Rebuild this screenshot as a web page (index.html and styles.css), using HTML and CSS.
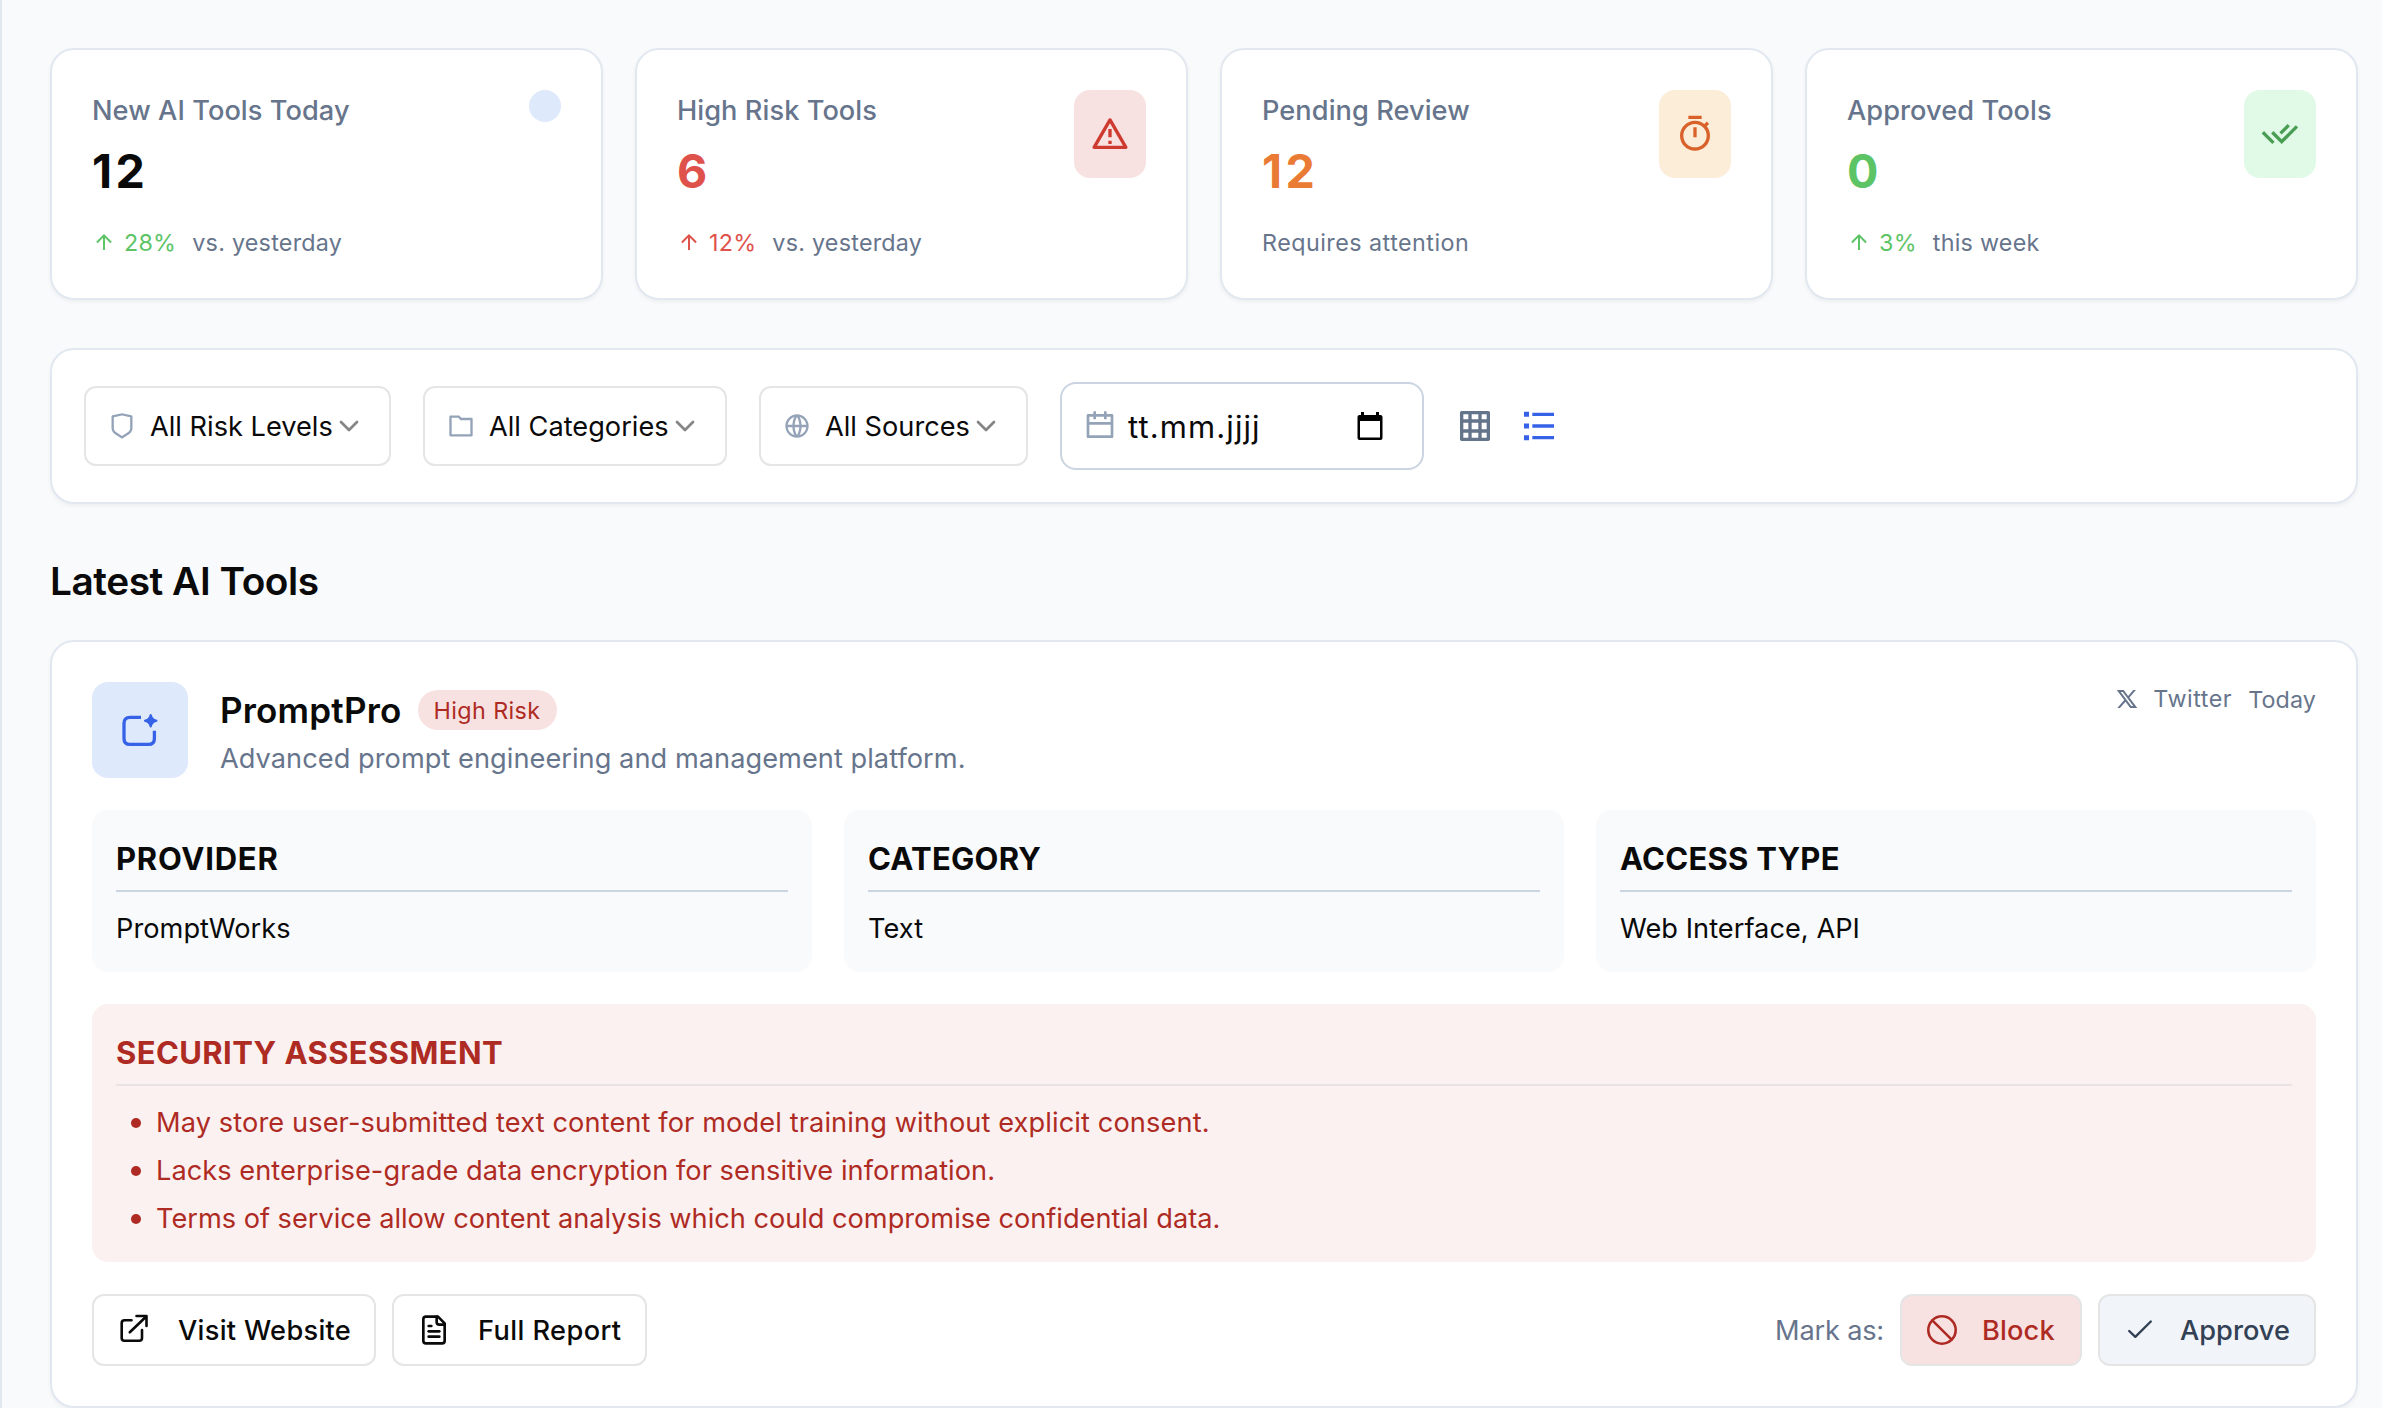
FILE: index.html
```html
<!DOCTYPE html>
<html lang="en">
<head>
<meta charset="utf-8">
<title>AI Tools Dashboard</title>
<link rel="stylesheet" href="styles.css">
</head>
<body>
<main class="page">
  <section class="stats">
    <article class="card stat">
      <div class="stat-body">
        <p class="stat-label">New AI Tools Today</p>
        <p class="stat-value">12</p>
        <p class="stat-note"><svg class="i24 green" viewBox="0 0 24 24"><path d="M13.0001 7.82843V20H11.0001V7.82843L5.63614 13.1924L4.22192 11.7782L12.0001 4L19.7783 11.7782L18.3641 13.1924L13.0001 7.82843Z"/></svg><span class="pct green">28%</span><span>vs. yesterday</span></p>
      </div>
      <span class="stat-dot"></span>
    </article>
    <article class="card stat">
      <div class="stat-body">
        <p class="stat-label">High Risk Tools</p>
        <p class="stat-value red">6</p>
        <p class="stat-note"><svg class="i24 red" viewBox="0 0 24 24"><path d="M13.0001 7.82843V20H11.0001V7.82843L5.63614 13.1924L4.22192 11.7782L12.0001 4L19.7783 11.7782L18.3641 13.1924L13.0001 7.82843Z"/></svg><span class="pct red">12%</span><span>vs. yesterday</span></p>
      </div>
      <span class="stat-icon tile-red"><svg class="i40" viewBox="0 0 24 24"><path d="M12.866 3L22.3923 19.5C22.6684 19.9783 22.5045 20.5899 22.0262 20.866C21.8742 20.9538 21.7017 21 21.5262 21H2.47372C1.92144 21 1.47372 20.5523 1.47372 20C1.47372 19.8245 1.51993 19.652 1.60769 19.5L11.134 3C11.4101 2.52171 12.0217 2.35783 12.5 2.63398C12.652 2.72174 12.7783 2.848 12.866 3ZM4.20577 19H19.7942L12 5.5L4.20577 19ZM11 16H13V18H11V16ZM11 9H13V14H11V9Z"/></svg></span>
    </article>
    <article class="card stat">
      <div class="stat-body">
        <p class="stat-label">Pending Review</p>
        <p class="stat-value orange">12</p>
        <p class="stat-note stat-note-plain"><span>Requires attention</span></p>
      </div>
      <span class="stat-icon tile-orange"><svg class="i40" viewBox="0 0 24 24"><path d="M17.6177 5.9681L19.0711 4.51472L20.4853 5.92893L19.0319 7.38231C20.2635 8.92199 21 10.875 21 13C21 17.9706 16.9706 22 12 22C7.02944 22 3 17.9706 3 13C3 8.02944 7.02944 4 12 4C14.125 4 16.078 4.73647 17.6177 5.9681ZM12 20C15.866 20 19 16.866 19 13C19 9.13401 15.866 6 12 6C8.13401 6 5 9.13401 5 13C5 16.866 8.13401 20 12 20ZM11 8H13V14H11V8ZM8 1H16V3H8V1Z"/></svg></span>
    </article>
    <article class="card stat">
      <div class="stat-body">
        <p class="stat-label">Approved Tools</p>
        <p class="stat-value green">0</p>
        <p class="stat-note"><svg class="i24 green" viewBox="0 0 24 24"><path d="M13.0001 7.82843V20H11.0001V7.82843L5.63614 13.1924L4.22192 11.7782L12.0001 4L19.7783 11.7782L18.3641 13.1924L13.0001 7.82843Z"/></svg><span class="pct green">3%</span><span>this week</span></p>
      </div>
      <span class="stat-icon tile-green"><svg class="i40" viewBox="0 0 24 24"><path d="M11.602 13.7599L13.014 15.1719L21.4795 6.7063L22.8938 8.12051L13.014 18.0003L6.65 11.6363L8.06421 10.2221L10.189 12.3469L11.6025 13.7594L11.602 13.7599ZM11.6037 10.9322L16.5563 5.97949L17.9666 7.38977L13.014 12.3424L11.6037 10.9322ZM8.77698 16.5873L7.36396 18.0003L1 11.6363L2.41421 10.2221L3.82723 11.6352L3.82604 11.6363L8.77698 16.5873Z"/></svg></span>
    </article>
  </section>

  <section class="card filters">
    <div class="select select-risk">
      <svg class="i28" viewBox="0 0 24 24"><path d="M3.78307 2.82598L12 1L20.2169 2.82598C20.6745 2.92766 21 3.33347 21 3.80217V13.7889C21 15.795 19.9974 17.6684 18.3282 18.7812L12 23L5.6718 18.7812C4.00261 17.6684 3 15.795 3 13.7889V3.80217C3 3.33347 3.32553 2.92766 3.78307 2.82598ZM5 4.60434V13.7889C5 15.1263 5.6684 16.3752 6.7812 17.1171L12 20.5963L17.2188 17.1171C18.3316 16.3752 19 15.1263 19 13.7889V4.60434L12 3.04879L5 4.60434Z"/></svg>
      <span class="select-text">All Risk Levels</span>
      <svg class="chevron" viewBox="0 0 20 12"><path d="M2 2L10 10L18 2"/></svg>
    </div>
    <div class="select select-category">
      <svg class="i28" viewBox="0 0 24 24"><path d="M4 5V19H20V7H11.5858L9.58579 5H4ZM12.4142 5H21C21.5523 5 22 5.44772 22 6V20C22 20.5523 21.5523 21 21 21H3C2.44772 21 2 20.5523 2 20V4C2 3.44772 2.44772 3 3 3H10.4142L12.4142 5Z"/></svg>
      <span class="select-text">All Categories</span>
      <svg class="chevron" viewBox="0 0 20 12"><path d="M2 2L10 10L18 2"/></svg>
    </div>
    <div class="select select-source">
      <svg class="i28" viewBox="0 0 24 24"><path d="M12 22C6.47715 22 2 17.5228 2 12C2 6.47715 6.47715 2 12 2C17.5228 2 22 6.47715 22 12C22 17.5228 17.5228 22 12 22ZM9.71002 19.6674C8.74743 17.6259 8.15732 15.3742 8.02731 13H4.06189C4.458 16.1765 6.71639 18.7747 9.71002 19.6674ZM10.0307 13C10.1811 15.4388 10.8778 17.7297 12 19.752C13.1222 17.7297 13.8189 15.4388 13.9693 13H10.0307ZM19.9381 13H15.9727C15.8427 15.3742 15.2526 17.6259 14.29 19.6674C17.2836 18.7747 19.542 16.1765 19.9381 13ZM4.06189 11H8.02731C8.15732 8.62577 8.74743 6.37407 9.71002 4.33256C6.71639 5.22533 4.458 7.8235 4.06189 11ZM10.0307 11H13.9693C13.8189 8.56122 13.1222 6.27025 12 4.24799C10.8778 6.27025 10.1811 8.56122 10.0307 11ZM14.29 4.33256C15.2526 6.37407 15.8427 8.62577 15.9727 11H19.9381C19.542 7.8235 17.2836 5.22533 14.29 4.33256Z"/></svg>
      <span class="select-text">All Sources</span>
      <svg class="chevron" viewBox="0 0 20 12"><path d="M2 2L10 10L18 2"/></svg>
    </div>
    <div class="date">
      <svg class="i32" viewBox="0 0 24 24"><path d="M9 1V3H15V1H17V3H21C21.5523 3 22 3.44772 22 4V20C22 20.5523 21.5523 21 21 21H3C2.44772 21 2 20.5523 2 20V4C2 3.44772 2.44772 3 3 3H7V1H9ZM20 11H4V19H20V11ZM7 5H4V9H20V5H17V7H15V5H9V7H7V5Z"/></svg>
      <span class="date-text">tt.mm.jjjj</span>
      <svg class="date-picker" viewBox="0 0 26 28"><path fill-rule="evenodd" d="M4 0H7V3H19V0H22V3H23.5Q25.5 3 25.5 5V26Q25.5 28 23.5 28H2.500Q.5 28 .5 26V5Q.5 3 2.500 3H4ZM3 9V25.500H23V9Z"/></svg>
    </div>
    <div class="views">
      <svg class="i40 view-grid" viewBox="0 0 24 24"><path d="M14 10H10V14H14V10ZM16 10V14H19V10H16ZM14 19V16H10V19H14ZM16 19H19V16H16V19ZM14 5H10V8H14V5ZM16 5V8H19V5H16ZM8 10H5V14H8V10ZM8 19V16H5V19H8ZM8 5H5V8H8V5ZM4 3H20C20.5523 3 21 3.44772 21 4V20C21 20.5523 20.5523 21 20 21H4C3.44772 21 3 20.5523 3 20V4C3 3.44772 3.44772 3 4 3Z"/></svg>
      <svg class="i40 view-list" viewBox="0 0 24 24"><path d="M8 4H21V6H8V4ZM3 3.5H6V6.5H3V3.5ZM3 10.5H6V13.5H3V10.5ZM3 17.5H6V20.5H3V17.5ZM8 11H21V13H8V11ZM8 18H21V20H8V18Z"/></svg>
    </div>
  </section>

  <h2 class="section-title">Latest AI Tools</h2>

  <article class="card tool">
    <header class="tool-head">
      <span class="tool-logo"><svg viewBox="0 0 40 40"><path class="frame" d="M21 7.400H10Q4 7.400 4 13.400V28.400Q4 34.400 10 34.400H28.400Q34.400 34.400 34.400 28.400V20.700"/><path class="spark" d="M30.700 3.900Q31.600 3.900 31.900 5.200Q32.700 8.700 36.200 9.500Q37.500 9.800 37.500 10.700Q37.500 11.600 36.200 11.900Q32.700 12.700 31.900 16.200Q31.600 17.500 30.700 17.500Q29.800 17.500 29.500 16.200Q28.700 12.700 25.200 11.900Q23.900 11.600 23.900 10.700Q23.900 9.800 25.200 9.500Q28.700 8.700 29.500 5.200Q29.800 3.900 30.700 3.900Z"/></svg></span>
      <div class="tool-title">
        <div class="tool-name-row"><h3 class="tool-name">PromptPro</h3><span class="badge">High Risk</span></div>
        <p class="tool-desc">Advanced prompt engineering and management platform.</p>
      </div>
      <div class="tool-meta">
        <svg class="i24" viewBox="0 0 24 24"><path d="M10.4883 14.651L15.25 21H22.25L14.3917 10.5223L20.9308 3H18.2808L13.1643 8.88578L8.75 3H1.75L9.26086 13.0145L2.31915 21H4.96917L10.4883 14.651ZM16.25 19L5.75 5H7.75L18.25 19H16.25Z"/></svg>
        <span class="meta-source">Twitter</span>
        <span class="meta-date">Today</span>
      </div>
    </header>

    <div class="facts">
      <section class="fact"><h4 class="block-title title-wide">PROVIDER</h4><p>PromptWorks</p></section>
      <section class="fact"><h4 class="block-title">CATEGORY</h4><p>Text</p></section>
      <section class="fact"><h4 class="block-title">ACCESS TYPE</h4><p>Web Interface, API</p></section>
    </div>

    <section class="security">
      <h4 class="block-title">SECURITY ASSESSMENT</h4>
      <ul class="risks">
        <li>May store user-submitted text content for model training without explicit consent.</li>
        <li>Lacks enterprise-grade data encryption for sensitive information.</li>
        <li>Terms of service allow content analysis which could compromise confidential data.</li>
      </ul>
    </section>

    <footer class="actions">
      <button class="btn btn-visit"><svg class="i32" viewBox="0 0 32 32"><path d="M13.500 6.300H6.500Q3.700 6.300 3.700 9.100V23.900Q3.700 26.700 6.500 26.700H21.200Q24 26.700 24 23.900V16M11.800 18.300L28 2.700M18.500 2H28.500V12"/></svg>Visit Website</button>
      <button class="btn btn-report"><svg class="i32" viewBox="0 0 24 24"><path d="M15 2H6a2 2 0 0 0-2 2v16a2 2 0 0 0 2 2h12a2 2 0 0 0 2-2V7Z"/><path d="M14 2v4a2 2 0 0 0 2 2h4"/><path d="M10 9H8"/><path d="M16 13H8"/><path d="M16 17H8"/></svg>Full Report</button>
      <span class="mark-label">Mark as:</span>
      <button class="btn btn-block"><svg class="i32" viewBox="0 0 32 32"><circle cx="16" cy="16" r="13.700"/><path d="M6.300 6.300L25.700 25.700"/></svg>Block</button>
      <button class="btn btn-approve"><svg class="i32" viewBox="0 0 32 32"><path d="M5.200 17L11.300 22.800L26.800 7.500"/></svg>Approve</button>
    </footer>
  </article>
</main>
</body>
</html>
```
FILE: styles.css
```css
* { box-sizing: border-box; margin: 0; padding: 0; }

body {
  height: 1408px;
  overflow: hidden;
  background: #f9fafc;
  color: #0a0a0a;
  font: 400 27.2px/40px Inter, sans-serif;
  font-optical-sizing: none;
  letter-spacing: .04px;
}

svg { display: block; flex: none; fill: currentColor; }
.i24 { width: 24px; height: 24px; }
.i28 { width: 28px; height: 28px; }
.i32 { width: 32px; height: 32px; }
.i40 { width: 40px; height: 40px; }

.page {
  height: 1408px;
  padding: 48px 24px 0 48px;
  border-left: 2px solid #e2e8f0;
}

.card {
  background: #fff;
  border: 2px solid #e2e8f0;
  border-radius: 24px;
  box-shadow: 0 2px 4px rgba(0, 0, 0, .05);
}

.red { color: #df524c; }
.orange { color: #e97b35; }
.green { color: #5dc466; }

/* Optical alignment: text sits one pixel lower in its line */
.stat-label, .tool-desc, .fact p, .risks li { padding-top: 1px; margin-bottom: -1px; }

/* Stat cards */
.stats { display: grid; grid-template-columns: repeat(4, 1fr); gap: 32px; }
.stat { display: flex; justify-content: space-between; align-items: flex-start; padding: 40px; height: 252px; }
.stat-label { color: #67758c; font-weight: 500; letter-spacing: .06px; }
.stat-value { margin-top: 8px; font-size: 46.600px; line-height: 66px; font-weight: 700; letter-spacing: 3.500px; }
.stat-note { display: flex; align-items: center; margin-top: 22px; font-size: 23.300px; line-height: 32px; letter-spacing: .25px; color: #67758c; }
.stat-note span { padding-top: 1px; margin-bottom: -1px; }
.stat-note-plain { letter-spacing: .48px; }
.stat-note .pct { margin: 0 16px -1px 8px; }
.stat-icon { display: flex; align-items: center; justify-content: center; width: 72px; height: 88px; border-radius: 16px; }
.stat-dot { width: 32px; height: 32px; border-radius: 50%; background: #dee9fb; }
.tile-red { background: #f8e2e1; color: #ce3a2f; }
.tile-orange { background: #fcedd9; color: #d9622b; }
.tile-green { background: #e1f9e7; color: #4a9e54; }

/* Filter bar */
.filters { display: flex; align-items: center; gap: 32px; height: 156px; margin-top: 48px; padding: 32px; }
.select { display: flex; align-items: center; height: 80px; padding-left: 22px; border: 2px solid #e5e5e5; border-radius: 12px; color: #94a3b8; }
.select-risk { width: 307px; }
.select-category { width: 304px; }
.select-source { width: 269px; }
.select-text { margin-left: 14px; padding-top: 2px; color: #0a0a0a; letter-spacing: 0; white-space: nowrap; }
.chevron { width: 20px; height: 12px; margin-left: 6px; fill: none; stroke: #858585; stroke-width: 2.700; stroke-linecap: round; stroke-linejoin: round; }
.date { display: flex; align-items: center; width: 364px; height: 88px; padding: 0 39px 0 22px; border: 2px solid #cbd5e1; border-radius: 16px; color: #94a3b8; }
.date-text { margin-left: 12px; padding-top: 2px; color: #0a0a0a; font-size: 31px; letter-spacing: 1.100px; }
.date-picker { width: 26px; height: 28px; margin-left: auto; color: #000; }
.views { display: flex; gap: 24px; margin-left: -1px; }
.view-grid { color: #64748b; }
.view-list { color: #3662e8; }

.section-title { margin: 49px 0 31px; font-size: 38.800px; line-height: 56px; font-weight: 600; letter-spacing: -.45px; }

/* Tool card */
.tool { display: flex; flex-direction: column; gap: 32px; height: 768px; padding: 40px; }
.tool-head { display: flex; align-items: flex-start; }
.tool-logo { display: flex; align-items: center; justify-content: center; width: 96px; height: 96px; margin-right: 32px; border-radius: 16px; background: #dee9fb; color: #3662e8; }
.tool-logo svg { width: 40px; height: 40px; }
.frame { fill: none; stroke: currentColor; stroke-width: 3.300; }
.tool-name-row { display: flex; align-items: center; gap: 16px; }
.tool-name { font-size: 35px; line-height: 56px; font-weight: 600; letter-spacing: .2px; }
.badge { height: 40px; padding: 1px 16px 0; border-radius: 20px; background: #f8e2e1; color: #ae2b24; font-size: 23.300px; letter-spacing: .4px; }
.tool-desc { color: #67758c; }
.tool-meta { display: flex; align-items: center; height: 34px; margin-left: auto; color: #67758c; font-size: 23.300px; line-height: 32px; }
.meta-source { margin-left: 14px; letter-spacing: .55px; }
.meta-date { margin: 2px 0 0 16px; letter-spacing: .1px; }

.facts { display: grid; grid-template-columns: repeat(3, 1fr); gap: 32px; }
.fact { padding: 24px; border-radius: 16px; background: #f9fafc; }
.block-title { margin-bottom: 16px; padding: 1px 0 7px; border-bottom: 2px solid #cbd5e1; font-size: 31px; line-height: 48px; font-weight: 700; letter-spacing: .25px; }
.title-wide { letter-spacing: .75px; }

.security { padding: 24px; border-radius: 16px; background: #fcf1f1; color: #ae2b24; }
.security .block-title { border-color: #e8e4e4; letter-spacing: .4px; }
.risks { display: flex; flex-direction: column; gap: 8px; list-style: none; }
.risks li { display: flex; align-items: center; gap: 15px; padding-left: 15px; }
.risks li:first-child { letter-spacing: .11px; }
.risks li:last-child { letter-spacing: -.02px; }
.risks li::before { content: ""; width: 10px; height: 10px; border-radius: 50%; background: currentColor; }

.actions { display: flex; align-items: center; gap: 16px; }
.btn { display: flex; align-items: center; height: 72px; padding: 2px 0 0 24px; border: 2px solid #e5e5e5; border-radius: 12px; background: #fff; color: #0a0a0a; font: inherit; font-weight: 500; letter-spacing: .3px; white-space: nowrap; }
.btn svg { margin: -2px 28px 0 0; fill: none; stroke: currentColor; stroke-width: 2.600; stroke-linecap: round; stroke-linejoin: round; }
.btn-visit { width: 284px; }
.btn-report { width: 255px; letter-spacing: .4px; }
.btn-report svg { stroke-width: 2; }
.mark-label { margin-left: auto; padding-top: 2px; color: #67758c; letter-spacing: -.2px; }
.btn-block { width: 182px; background: #f8e2e1; color: #ae2b24; letter-spacing: .15px; }
.btn-approve { width: 218px; background: #f1f5fa; color: #334155; letter-spacing: 0; }
.btn-block svg, .btn-approve svg { margin-right: 24px; }
.btn-approve svg { stroke-width: 2.400; }
```
